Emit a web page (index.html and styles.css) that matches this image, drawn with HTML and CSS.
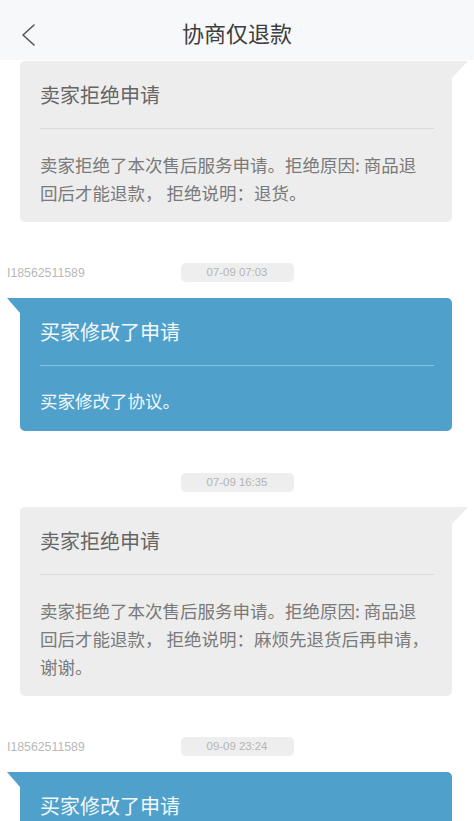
FILE: index.html
```html
<!DOCTYPE html>
<html lang="zh-CN">
<head>
<meta charset="utf-8">
<title>协商仅退款</title>
<link rel="stylesheet" href="styles.css">
</head>
<body>
<div class="page">
  <header class="topbar">
    <span class="back">
      <svg width="18" height="24" viewBox="0 0 18 24"><path d="M15 2 L4 12 L15 22" fill="none" stroke="#555" stroke-width="1.6" stroke-linecap="round" stroke-linejoin="round"/></svg>
    </span>
    <h1 class="title">协商仅退款</h1>
  </header>

  <main class="feed">
    <section class="msg first">
      <div class="card seller">
        <div class="card-title">卖家拒绝申请</div>
        <div class="card-line"></div>
        <div class="card-body">卖家拒绝了本次售后服务申请。拒绝原因: 商品退<br>回后才能退款， 拒绝说明：退货。</div>
      </div>
    </section>

    <section class="msg">
      <div class="meta">
        <span class="user">I18562511589</span>
        <span class="time">07-09 07:03</span>
      </div>
      <div class="card buyer">
        <div class="card-title">买家修改了申请</div>
        <div class="card-line"></div>
        <div class="card-body">买家修改了协议。</div>
      </div>
    </section>

    <section class="msg">
      <div class="meta">
        <span class="user"></span>
        <span class="time">07-09 16:35</span>
      </div>
      <div class="card seller">
        <div class="card-title">卖家拒绝申请</div>
        <div class="card-line"></div>
        <div class="card-body">卖家拒绝了本次售后服务申请。拒绝原因: 商品退<br>回后才能退款， 拒绝说明：麻烦先退货后再申请，<br>谢谢。</div>
      </div>
    </section>

    <section class="msg">
      <div class="meta">
        <span class="user">I18562511589</span>
        <span class="time">09-09 23:24</span>
      </div>
      <div class="card buyer">
        <div class="card-title">买家修改了申请</div>
        <div class="card-line"></div>
        <div class="card-body">买家修改了协议。</div>
      </div>
    </section>
  </main>
</div>
</body>
</html>
```

FILE: styles.css
```css
* { box-sizing: border-box; }
html, body {
  margin: 0;
  padding: 0;
  background: #ffffff;
}
body {
  font-family: "Noto Sans CJK SC", "Noto Sans", sans-serif;
  width: 474px;
  height: 821px;
  overflow: hidden;
}
.page {
  width: 474px;
}
.topbar {
  height: 60px;
  background: #f7f8f9;
  display: flex;
  align-items: center;
  justify-content: center;
  position: relative;
}
.back {
  position: absolute;
  left: 19px;
  top: 23px;
  width: 18px;
  height: 24px;
  display: block;
}
.back svg { display: block; }
.title {
  margin: 0;
  font-size: 22px;
  font-weight: 400;
  color: #3e3e3e;
  line-height: 30px;
  padding-top: 4px;
}
.feed {
  display: flex;
  flex-direction: column;
  gap: 41px;
  padding-top: 1px;
}
.msg {
  display: flex;
  flex-direction: column;
  gap: 15px;
}
.meta {
  display: grid;
  grid-template-columns: 1fr 113px 1fr;
  align-items: center;
  height: 20px;
}
.user {
  font-family: "Liberation Sans", Arial, sans-serif;
  font-size: 12.3px;
  color: #b8b8b8;
  padding-left: 7px;
}
.time {
  grid-column: 2;
  height: 19px;
  border-radius: 5px;
  background: #eeeeee;
  color: #b4b4b4;
  font-family: "Liberation Sans", Arial, sans-serif;
  font-size: 11.4px;
  line-height: 19px;
  text-align: center;
}
.card {
  position: relative;
  margin-left: 20px;
  width: 432px;
  padding: 20px 18px 15px 20px;
  border-radius: 5px;
}
.card-title {
  font-size: 20px;
  line-height: 28px;
  height: 28px;
  margin-bottom: 19px;
}
.card-line {
  height: 1px;
}
.card-body {
  margin-top: 21.5px;
  font-size: 17.5px;
  line-height: 28px;
  white-space: nowrap;
}
.seller {
  background: #ededed;
  border-top-right-radius: 0;
}
.seller::after {
  content: "";
  position: absolute;
  top: 0;
  right: -16px;
  width: 0;
  height: 0;
  border-top: 17px solid #ededed;
  border-right: 16px solid transparent;
}
.seller .card-title { color: #666666; }
.seller .card-line { background: #d9d9d9; }
.seller .card-body { color: #7a7a7a; }
.buyer {
  background: #4fa1cc;
  border-top-left-radius: 0;
  padding-bottom: 16px;
}
.buyer::before {
  content: "";
  position: absolute;
  top: 0;
  left: -13px;
  width: 0;
  height: 0;
  border-top: 15px solid #4fa1cc;
  border-left: 13px solid transparent;
}
.buyer .card-title { color: #f3f8fb; }
.buyer .card-line { background: #8cc4e2; }
.buyer .card-body { color: #f3f8fb; }
```
